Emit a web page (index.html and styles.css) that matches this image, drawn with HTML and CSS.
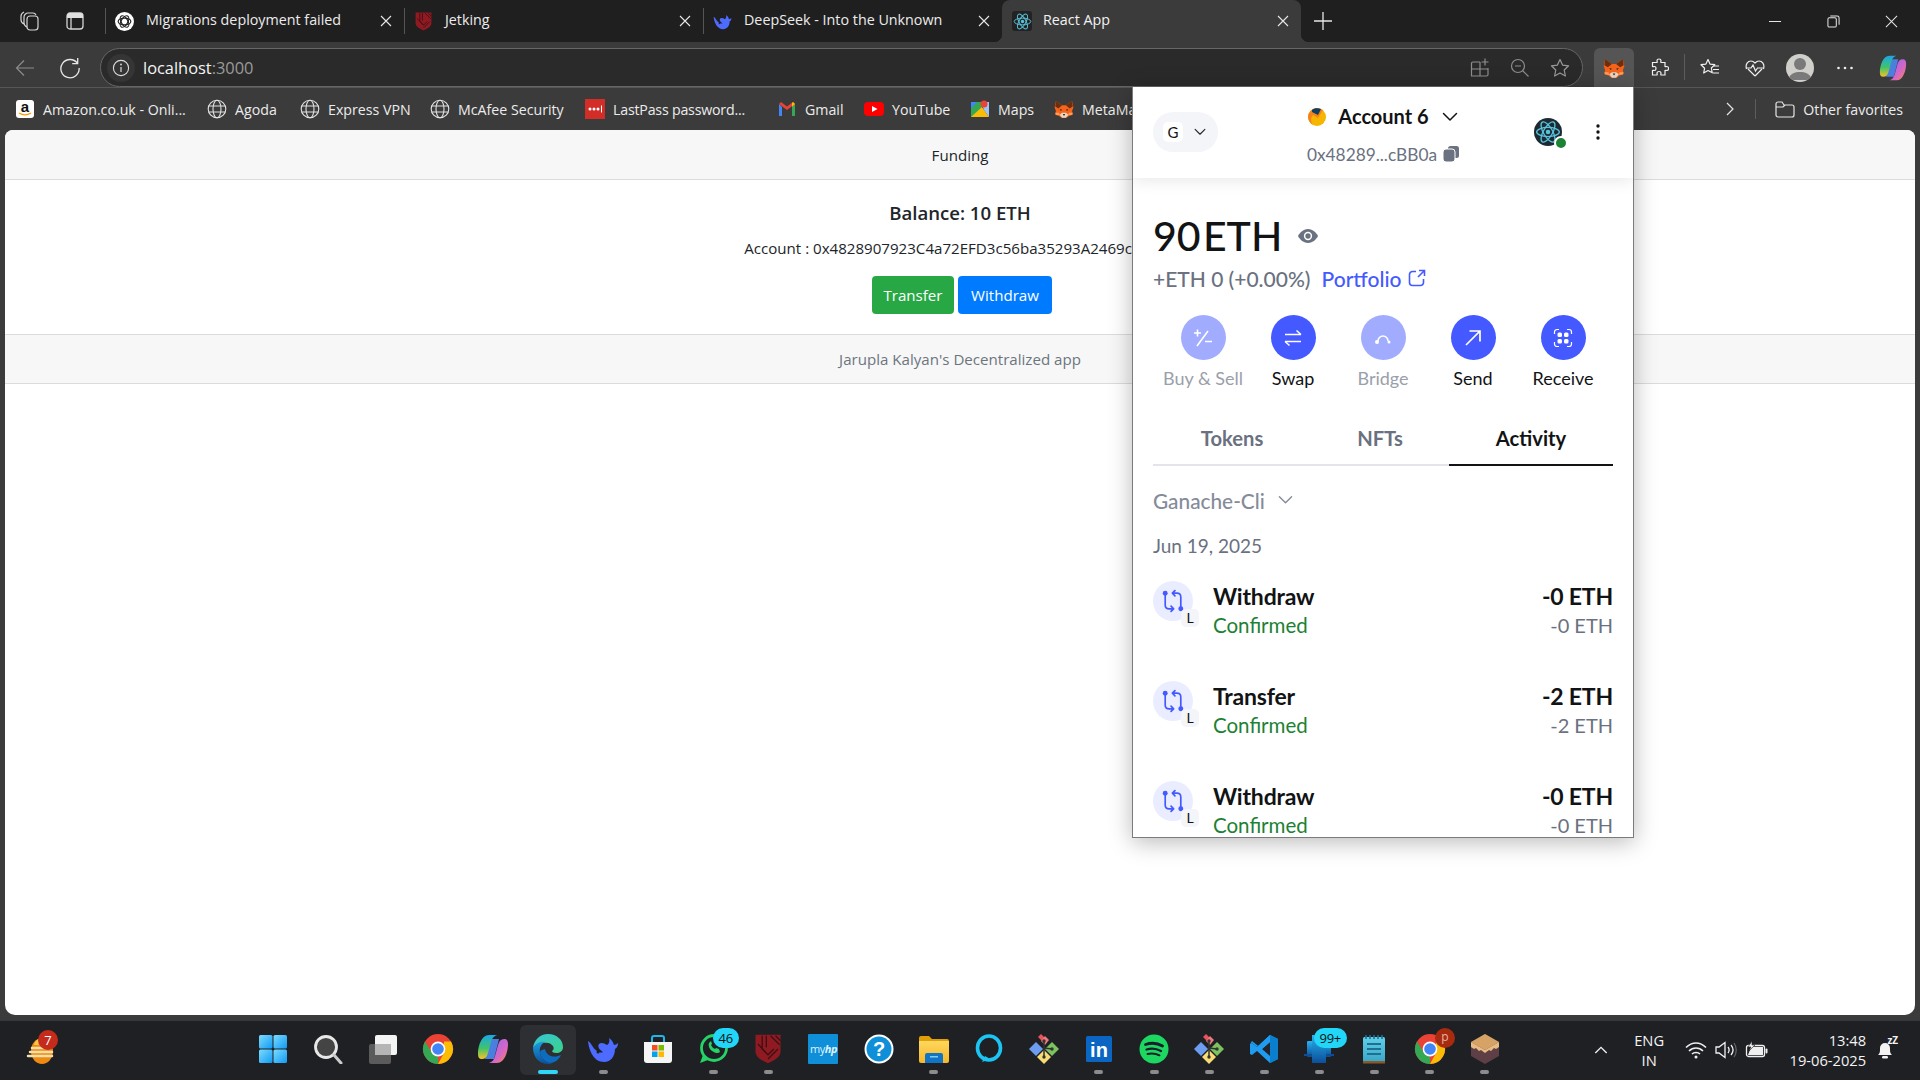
FILE: index.html
```html
<!DOCTYPE html>
<html lang="en">
<head>
<meta charset="utf-8">
<title>React App</title>
<link rel="stylesheet" href="styles.css">
</head>
<body>
<svg class="defs" aria-hidden="true">
  <defs>
    <linearGradient id="gWin" x1="0" y1="0" x2="1" y2="1"><stop offset="0" stop-color="#7ddcfc"/><stop offset="1" stop-color="#0f9af5"/></linearGradient>
    <linearGradient id="gCopL" x1="0" y1="0" x2="0" y2="1"><stop offset="0" stop-color="#1ba7e8"/><stop offset=".55" stop-color="#3fc46a"/><stop offset="1" stop-color="#f7c325"/></linearGradient>
    <linearGradient id="gCopR" x1="0" y1="0" x2="1" y2="1"><stop offset="0" stop-color="#8a6bf0"/><stop offset=".6" stop-color="#d566c8"/><stop offset="1" stop-color="#f88a4a"/></linearGradient>
    <linearGradient id="gEdge" x1="0" y1="0" x2="1" y2="1"><stop offset="0" stop-color="#36c6d6"/><stop offset="1" stop-color="#3bd08a"/></linearGradient>
    <linearGradient id="gEdge2" x1="0" y1="0" x2="0" y2="1"><stop offset="0" stop-color="#1b9de2"/><stop offset="1" stop-color="#0b4f98"/></linearGradient>
    <linearGradient id="gFold" x1="0" y1="0" x2="0" y2="1"><stop offset="0" stop-color="#ffd75e"/><stop offset="1" stop-color="#f5b82a"/></linearGradient>
    <linearGradient id="gNote" x1="0" y1="0" x2="0" y2="1"><stop offset="0" stop-color="#5fd0ea"/><stop offset="1" stop-color="#3aa6c8"/></linearGradient>
    <linearGradient id="gOut" x1="0" y1="0" x2="0" y2="1"><stop offset="0" stop-color="#29b1f0"/><stop offset="1" stop-color="#0b4f98"/></linearGradient>

    <symbol id="fox" viewBox="0 0 32 32">
      <polygon points="3,3 13,10 19,10 29,3 31,13 29,19 30,25 24,27 20,30 12,30 8,27 2,25 3,19 1,13" fill="#f6641b"/>
      <polygon points="3,3 13,10 7,15 2,12" fill="#6b2f10"/><polygon points="29,3 19,10 25,15 30,12" fill="#6b2f10"/>
      <polygon points="9,25 13,22 19,22 23,25 19,30 13,30" fill="#ead9c8"/><polygon points="2,22 8,22 9,26 3,25" fill="#ffa15c"/><polygon points="30,22 24,22 23,26 29,25" fill="#ffa15c"/>
      <polygon points="9,16 13,17 11,19" fill="#33261c"/><polygon points="23,16 19,17 21,19" fill="#33261c"/><polygon points="14,24 18,24 16,27" fill="#33261c"/>
    </symbol>
    <symbol id="react" viewBox="0 0 24 24">
      <g fill="none" stroke="#58c4dc" stroke-width="1.2"><ellipse cx="12" cy="12" rx="10.5" ry="4.2"/><ellipse cx="12" cy="12" rx="10.5" ry="4.2" transform="rotate(60 12 12)"/><ellipse cx="12" cy="12" rx="10.5" ry="4.2" transform="rotate(120 12 12)"/></g><circle cx="12" cy="12" r="2.1" fill="#58c4dc"/>
    </symbol>
    <symbol id="whale" viewBox="0 0 32 32">
      <path d="M1 8c1 10 6 21 16 21 7 0 11-6 11-13 2-1 3-3 3-6-1 1-3 2-4 2-1-3-2-5-5-7 1 3 0 6-2 7-3-2-6-3-8-1-2 3 1 6 4 8-3 2-8-2-10-5C4 11 3 9 1 8z" fill="#4d6bfe"/><circle cx="11" cy="19" r="1.500" fill="#1f2024"/>
    </symbol>
    <symbol id="shield" viewBox="0 0 32 36">
      <path d="M1 1h30v20c0 7-8 11-15 14C9 32 1 28 1 21z" fill="#8f1a22"/>
      <g stroke="#3d1014" stroke-width="1.6" fill="none"><path d="M9 2v16l7 7 7-7M14 2v14M19 2l11 11M25 2l6 6M4 12l12 13M28 18l-12 12"/></g>
    </symbol>
    <symbol id="gpt" viewBox="0 0 24 24">
      <circle cx="12" cy="12" r="12" fill="#fff"/>
      <g fill="none" stroke="#222" stroke-width="1.5"><ellipse cx="12" cy="12" rx="8" ry="4.2"/><ellipse cx="12" cy="12" rx="8" ry="4.2" transform="rotate(60 12 12)"/><ellipse cx="12" cy="12" rx="8" ry="4.2" transform="rotate(120 12 12)"/></g>
    </symbol>
    <symbol id="globe" viewBox="0 0 20 20">
      <g fill="none" stroke="#e2e2e2" stroke-width="1.1"><circle cx="10" cy="10" r="8.8"/><ellipse cx="10" cy="10" rx="4" ry="8.8"/><path d="M1.6 7h16.8M1.6 13h16.8"/></g>
    </symbol>
    <symbol id="chrome" viewBox="0 0 32 32">
      <circle cx="16" cy="16" r="15" fill="#ea4335"/>
      <path d="M16 31A15 15 0 0 1 3 8.5L10 20l6 4z" fill="#34a853"/>
      <path d="M29 8.500A15 15 0 0 1 16 31l6-11 0-11.500z" fill="#fbbc05"/>
      <circle cx="16" cy="16" r="7.400" fill="#fff"/><circle cx="16" cy="16" r="5.800" fill="#4285f4"/>
    </symbol>
    <symbol id="copilot" viewBox="0 0 32 32">
      <path d="M13 6h9l-5 20H8z" fill="#4a7fe0"/>
      <path d="M12 2h8c-3 1-5 3-6 7l-3 11c-1 4-3 6-6 6-3 0-4-2-4-5C1 14 4 2 12 2z" fill="url(#gCopL)"/>
      <path d="M20 30h-8c3-1 5-3 6-7l3-11c1-4 3-6 6-6 3 0 4 2 4 5 0 7-3 19-11 19z" fill="url(#gCopR)"/>
    </symbol>
    <symbol id="edge" viewBox="0 0 32 32">
      <path d="M1 15C2 7 8 1 16 1c9 0 15 6 15 13 0 4-3 6-7 6-2 0-4-1-4-2 2-1 2-3 1-5-2-3-6-4-10-3-5 1-8 3-10 5z" fill="url(#gEdge)"/>
      <path d="M1 15c2-4 7-7 12-6-4 2-6 6-5 11 1 5 5 9 10 10 1 0 2 0 3 0-2 1-4 1-5 1C7 31 1 24 1 15z" fill="url(#gEdge2)"/>
      <path d="M13 16c1 6 7 9 13 7 1 0 2-1 3-1-2 5-7 8-11 8-5-1-9-5-10-10 0-2 1-3 2-3z" fill="#0d6cbd"/>
    </symbol>
    <symbol id="git" viewBox="0 0 32 32">
      <polygon points="16,10 10,4 13,1 19,7" fill="#e8545a"/><polygon points="17,3 21,7 17,12 13,8" fill="#ee7a7d"/>
      <polygon points="1,16 8,9 15,16 8,23" fill="#6d9df0"/><polygon points="17,16 24,9 31,16 24,23" fill="#7cc35f"/><polygon points="9,24 16,17 23,24 16,31" fill="#f7dc75"/>
      <path d="M16 8v16M16 15l8 1" stroke="#333" stroke-width="1.5"/><circle cx="16" cy="24" r="1.700" fill="#333"/><circle cx="16" cy="8" r="1.700" fill="#333"/><circle cx="24" cy="16" r="1.700" fill="#333"/>
    </symbol>
    <symbol id="swaprow" viewBox="0 0 20 20">
      <g fill="none" stroke="#4459ff" stroke-width="1.300" stroke-linecap="round" stroke-linejoin="round"><path d="M4 4v9c0 2 1 3 3 3h3M8.500 14l2 2-2 2"/><path d="M16 16V7c0-2-1-3-3-3h-3M11.500 2l-2 2 2 2"/></g>
      <circle cx="4" cy="4" r="1.900" fill="#4459ff"/><circle cx="16" cy="16" r="1.900" fill="#4459ff"/>
    </symbol>
    <symbol id="chev" viewBox="0 0 16 10"><path d="M1.500 1.500L8 8l6.500-6.500" fill="none" stroke="currentColor" stroke-width="1.500" stroke-linecap="round" stroke-linejoin="round"/></symbol>
    <symbol id="x" viewBox="0 0 12 12"><path d="M1 1l10 10M11 1L1 11" stroke="#e8e8e8" stroke-width="1.100" fill="none"/></symbol>
  </defs>
</svg>

<header class="tabbar">
  <div class="tab-tools">
    <svg class="i20" viewBox="0 0 20 20"><g fill="none" stroke="#d5d5d5" stroke-width="1.200"><rect x="7" y="5" width="11" height="14" rx="3"/><path d="M7 16c-2-1-3-2-3-4V6c0-2 2-4 4-4h5c1 0 2 0 3 2M4 13c-2-1-3-2-3-4V5c0-2 1-3 3-4"/></g></svg>
    <svg class="i20" viewBox="0 0 20 20"><rect x="2" y="2" width="16" height="16" rx="3" fill="none" stroke="#d5d5d5" stroke-width="1.300"/><path d="M2 5a3 3 0 0 1 3-3h10a3 3 0 0 1 3 3v2H2z" fill="#e0e0e0"/><path d="M6 7v11" stroke="#d5d5d5" stroke-width="1.300"/></svg>
  </div>
  <div class="tab tab-sep"><svg class="fav"><use href="#gpt"/></svg><span class="tab-title">Migrations deployment failed</span><svg class="tab-x"><use href="#x"/></svg></div>
  <div class="tab tab-sep"><svg class="fav"><use href="#shield"/></svg><span class="tab-title">Jetking</span><svg class="tab-x"><use href="#x"/></svg></div>
  <div class="tab tab-sep"><svg class="fav"><use href="#whale"/></svg><span class="tab-title">DeepSeek - Into the Unknown</span><svg class="tab-x"><use href="#x"/></svg></div>
  <div class="tab tab-active"><span class="fav-box"><svg class="fav"><use href="#react"/></svg></span><span class="tab-title">React App</span><svg class="tab-x"><use href="#x"/></svg></div>
  <svg class="newtab" viewBox="0 0 18 18"><path d="M9 0v18M0 9h18" stroke="#e8e8e8" stroke-width="1.300"/></svg>
  <div class="win-ctrls">
    <svg class="win-btn" viewBox="0 0 14 14"><path d="M0 7h13" stroke="#e6e6e6" stroke-width="1.100"/></svg>
    <svg class="win-btn" viewBox="0 0 14 14"><rect x="1" y="3" width="9" height="10" rx="1.500" fill="none" stroke="#e6e6e6" stroke-width="1.100"/><path d="M3.500 1H11a2 2 0 0 1 2 2v7.500" fill="none" stroke="#e6e6e6" stroke-width="1.100"/></svg>
    <svg class="win-btn" viewBox="0 0 14 14"><path d="M1 1l12 12M13 1L1 13" stroke="#e6e6e6" stroke-width="1.100"/></svg>
  </div>
</header>

<nav class="toolbar">
  <div class="tool tool-back"><svg class="i20" viewBox="0 0 20 20"><path d="M19 10H1.500M9 2.500L1.500 10 9 17.500" fill="none" stroke="#8b8b8b" stroke-width="1.200"/></svg></div>
  <div class="tool tool-reload"><svg class="i22" viewBox="0 0 20 20"><path d="M16.800 5.800A8.300 8.300 0 1 0 18.300 10M17 1v5h-5" fill="none" stroke="#e6e6e6" stroke-width="1.200"/></svg></div>
  <div class="address">
    <span class="info"><svg class="i18" viewBox="0 0 18 18"><circle cx="9" cy="9" r="7.600" fill="none" stroke="#ddd" stroke-width="1.100"/><path d="M9 8v5" stroke="#ddd" stroke-width="1.200"/><circle cx="9" cy="5.500" r=".9" fill="#ddd"/></svg></span>
    <span class="url">localhost<span class="url-port">:3000</span></span>
    <span class="addr-actions">
      <svg class="i20" viewBox="0 0 20 20"><g fill="none" stroke="#8e8e8e" stroke-width="1.200"><path d="M10 4H3a1.500 1.500 0 0 0-1.500 1.500V18h15a1.500 1.500 0 0 0 1.500-1.500V10M1.500 11H18M10 4v14"/><path d="M15 .5v7M11.500 4h7"/></g></svg>
      <svg class="i20" viewBox="0 0 20 20"><g fill="none" stroke="#8e8e8e" stroke-width="1.200"><circle cx="8" cy="8" r="6.500"/><path d="M12.500 12.500L18.500 18.500M5 8h6"/></g></svg>
      <svg class="i20" viewBox="0 0 20 20"><path d="M10 1.500l2.600 5.600 6 .7-4.400 4.200 1.200 6L10 15l-5.400 3 1.200-6L1.400 7.800l6-.7z" fill="none" stroke="#9a9a9a" stroke-width="1.200" stroke-linejoin="round"/></svg>
    </span>
  </div>
  <div class="ext-active"><svg class="i22"><use href="#fox"/></svg></div>
  <div class="tool tool-wide"><svg class="i20" viewBox="0 0 20 20"><path d="M8 2.500c0-2 4-2 4 0 0 1-.5 1.500 0 2h4v4c.5.500 1 0 2 0 2 0 2 4 0 4-1 0-1.500-.5-2 0v4.500h-4c-.5-.5 0-1 0-2 0-2-4-2-4 0 0 1 .5 1.500 0 2H3.500v-4.500c.5-.5 1 0 2 0 2 0 2-4 0-4-1 0-1.500.5-2 0v-4h4.500c.5-.5 0-1 0-2z" fill="none" stroke="#f0f0f0" stroke-width="1.200"/></svg></div>
  <span class="tool-sep"></span>
  <div class="tool tool-wide"><svg class="i20" viewBox="0 0 20 20"><path d="M8 1.500l2 4.600 4.800.6-3.500 3.300 1 4.800L8 12.500 3.700 15l.9-4.800L1 6.700l4.900-.6z" fill="none" stroke="#f0f0f0" stroke-width="1.200" stroke-linejoin="round"/><path d="M14 8h5M13 11.500h6M13 15h6" stroke="#f0f0f0" stroke-width="1.200"/></svg></div>
  <div class="tool tool-mid"><svg class="i20" viewBox="0 0 20 20"><path d="M1.500 11C0 6 3 3 6 3c2 0 3 1 4 2 1-1 2-2 4-2 3 0 6 3 4.500 8M10 18l-7-7M10 18l7-7" fill="none" stroke="#f0f0f0" stroke-width="1.200"/><path d="M1 10h5l2-3 2.500 6 2-3h6" fill="none" stroke="#f0f0f0" stroke-width="1.200"/></svg></div>
  <div class="tool tool-wide"><span class="avatar"><svg viewBox="0 0 28 28"><circle cx="14" cy="10" r="6" fill="#7a7a7a"/><path d="M2 26c2-7 7-8 12-8s10 1 12 8z" fill="#7a7a7a"/></svg></span></div>
  <div class="tool tool-mid"><svg class="i20" viewBox="0 0 20 20"><circle cx="3.500" cy="10" r="1.300" fill="#eee"/><circle cx="10" cy="10" r="1.300" fill="#eee"/><circle cx="16.500" cy="10" r="1.300" fill="#eee"/></svg></div>
  <div class="tool tool-last"><svg class="i28"><use href="#copilot"/></svg></div>
</nav>

<div class="bookmarks">
  <div class="bm"><span class="amz">a<svg class="amz-smile" viewBox="0 0 18 6"><path d="M3 1c4 2.500 8 2.500 12 0" stroke="#f90" stroke-width="1.400" fill="none"/></svg></span><span>Amazon.co.uk - Onli...</span></div>
  <div class="bm"><svg class="i20"><use href="#globe"/></svg><span>Agoda</span></div>
  <div class="bm"><svg class="i20"><use href="#globe"/></svg><span>Express VPN</span></div>
  <div class="bm"><svg class="i20"><use href="#globe"/></svg><span>McAfee Security</span></div>
  <div class="bm"><svg class="i20" viewBox="0 0 20 20"><rect width="20" height="20" fill="#d32d27"/><circle cx="5" cy="10" r="1.500" fill="#fff"/><circle cx="9" cy="10" r="1.500" fill="#fff"/><circle cx="13" cy="10" r="1.500" fill="#fff"/><path d="M16.500 6.500v7" stroke="#fff" stroke-width="1"/></svg><span class="bm-tight">LastPass password...</span></div>
  <div class="bm"><svg class="i18" viewBox="0 0 18 18"><path d="M1 4v12h3V7z" fill="#4285f4"/><path d="M14 7v9h3V4z" fill="#34a853"/><path d="M1 4l8 6 8-6-2-2-6 4.500L3 2z" fill="#ea4335"/><path d="M14 7l3-3-2-2-1 1z" fill="#fbbc05"/></svg><span>Gmail</span></div>
  <div class="bm"><svg class="i20" viewBox="0 0 20 20"><rect x="0" y="3" width="20" height="14" rx="4" fill="#f00"/><polygon points="8,7 8,13 13.500,10" fill="#fff"/></svg><span>YouTube</span></div>
  <div class="bm"><svg class="i20" viewBox="0 0 20 20"><polygon points="1,3 12,3 12,18 1,18" fill="#34a853"/><polygon points="1,18 12,8 19,18" fill="#fbbc05"/><polygon points="1,3 7,3 1,10" fill="#4285f4"/><polygon points="11,3 19,3 19,18 14,11" fill="#9fc3f5"/><circle cx="14" cy="5" r="3.500" fill="#ea4335"/></svg><span>Maps</span></div>
  <div class="bm"><svg class="i20"><use href="#fox"/></svg><span>MetaMask</span></div>
  <div class="bm-end">
    <svg class="i14" viewBox="0 0 14 14"><path d="M4 1l6 6-6 6" fill="none" stroke="#e6e6e6" stroke-width="1.200"/></svg>
    <span class="bm-sep"></span>
    <svg class="i20" viewBox="0 0 20 20"><path d="M1 5a2 2 0 0 1 2-2h4l2 3h8a2 2 0 0 1 2 2v8a2 2 0 0 1-2 2H3a2 2 0 0 1-2-2zM1 8h7l2-2" fill="none" stroke="#e6e6e6" stroke-width="1.200"/></svg>
    <span class="bm-other">Other favorites</span>
  </div>
</div>

<main class="viewport">
  <section class="page">
    <div class="card-head">Funding</div>
    <div class="card-body">
      <h5 class="balance">Balance: 10 ETH</h5>
      <p class="account">Account : 0x4828907923C4a72EFD3c56ba35293A2469ccBB0a</p>
      <div class="btns"><button class="btn btn-green">Transfer</button><button class="btn btn-blue">Withdraw</button></div>
    </div>
    <div class="card-foot">Jarupla Kalyan's Decentralized app</div>
  </section>
</main>

<footer class="taskbar">
  <div class="tb-left">
    <div class="widget">
      <svg class="i30" viewBox="0 0 30 30"><ellipse cx="16" cy="16" rx="11" ry="13" fill="#ee8a12"/><path d="M8 10c1-5 5-7 9-7 5 0 8 3 9 7z" fill="#f9c84a"/><g stroke="#f6dfa8" stroke-width="2.500" stroke-linecap="round"><path d="M6 13h12M4 17h22M2 21h24"/></g></svg>
      <span class="badge badge-red">7</span>
    </div>
  </div>
  <div class="apps">
    <div class="app"><svg class="i30" viewBox="0 0 30 30"><rect x="1" y="1" width="13.500" height="13.500" rx="1.500" fill="url(#gWin)"/><rect x="15.500" y="1" width="13.500" height="13.500" rx="1.500" fill="url(#gWin)"/><rect x="1" y="15.500" width="13.500" height="13.500" rx="1.500" fill="url(#gWin)"/><rect x="15.500" y="15.500" width="13.500" height="13.500" rx="1.500" fill="url(#gWin)"/></svg></div>
    <div class="app"><svg class="i30" viewBox="0 0 30 30"><circle cx="13" cy="13" r="10.500" fill="#444" stroke="#e8e8e8" stroke-width="2.800"/><path d="M21 21l7 8" stroke="#ccc" stroke-width="3" stroke-linecap="round"/></svg></div>
    <div class="app"><svg class="i30" viewBox="0 0 30 30"><rect x="1" y="10" width="22" height="20" rx="2" fill="#5b5b5b"/><rect x="7" y="1" width="22" height="20" rx="2" fill="#f4f4f4"/><rect x="7" y="10" width="16" height="11" fill="#b5b5b5"/></svg></div>
    <div class="app"><svg class="i32"><use href="#chrome"/></svg></div>
    <div class="app"><svg class="i32"><use href="#copilot"/></svg></div>
    <div class="app app-active"><svg class="i32"><use href="#edge"/></svg><span class="run run-active"></span></div>
    <div class="app"><svg class="i32"><use href="#whale"/></svg><span class="run"></span></div>
    <div class="app"><svg class="i30" viewBox="0 0 30 30"><path d="M1 8h28v18a3 3 0 0 1-3 3H4a3 3 0 0 1-3-3z" fill="#f5f5f5"/><path d="M9 8V4a2 2 0 0 1 2-2h8a2 2 0 0 1 2 2v4" fill="none" stroke="#1fb6e8" stroke-width="2"/><rect x="9" y="11" width="5.500" height="5.500" fill="#f25022"/><rect x="15.500" y="11" width="5.500" height="5.500" fill="#7fba00"/><rect x="9" y="17.500" width="5.500" height="5.500" fill="#00a4ef"/><rect x="15.500" y="17.500" width="5.500" height="5.500" fill="#ffb900"/></svg></div>
    <div class="app"><svg class="i32" viewBox="0 0 32 32"><circle cx="17" cy="15" r="12.500" fill="none" stroke="#25d366" stroke-width="2.800"/><path d="M6 22l-3 8 8-3z" fill="#25d366"/><path d="M12 10c-1 2 0 6 3 8s6 3 8 1l-1-3-3-1-1 1c-2-1-3-2-4-4l1-1-1-3z" fill="#25d366"/></svg><span class="badge badge-cyan">46</span><span class="run"></span></div>
    <div class="app"><svg class="i30" viewBox="0 0 32 36"><use href="#shield"/></svg><span class="run"></span></div>
    <div class="app"><div class="myhp">my<i>hp</i></div></div>
    <div class="app"><svg class="i30" viewBox="0 0 30 30"><circle cx="15" cy="15" r="14.500" fill="#fff"/><circle cx="15" cy="15" r="12.500" fill="#0f8fd8"/><text x="15" y="22" text-anchor="middle" class="help-q">?</text></svg></div>
    <div class="app"><svg class="i30" viewBox="0 0 30 30"><path d="M0 4a2 2 0 0 1 2-2h8l3 3h15a2 2 0 0 1 2 2v3H0z" fill="#e0a008"/><path d="M0 7h30v20a2 2 0 0 1-2 2H2a2 2 0 0 1-2-2z" fill="url(#gFold)"/><path d="M6 21a2 2 0 0 1 2-2h14a2 2 0 0 1 2 2v8H6z" fill="#1274c4"/><rect x="11" y="22" width="8" height="1.500" fill="#7ecbf5"/></svg><span class="run"></span></div>
    <div class="app"><svg class="i30" viewBox="0 0 30 30"><ellipse cx="15" cy="14" rx="11.500" ry="12" fill="none" stroke="#1cc4f4" stroke-width="3.600"/><path d="M8 28l3-6 5 3z" fill="#1cc4f4"/></svg></div>
    <div class="app"><svg class="i32"><use href="#git"/></svg></div>
    <div class="app"><svg class="i30" viewBox="0 0 30 30"><rect x="2" y="2" width="26" height="26" rx="1.500" fill="#0a66c2"/><text x="15" y="23" text-anchor="middle" class="li-in">in</text></svg><span class="run"></span></div>
    <div class="app"><svg class="i30" viewBox="0 0 30 30"><circle cx="15" cy="15" r="14.500" fill="#1ed760"/><g fill="none" stroke="#16202a" stroke-linecap="round"><path d="M6.500 10.500c6-2 12-1.500 17 1.500" stroke-width="2.800"/><path d="M7.500 15.500c5-1.500 10-1 14.500 1.500" stroke-width="2.300"/><path d="M8.500 20c4-1 8-.7 12 1.300" stroke-width="1.900"/></g></svg><span class="run"></span></div>
    <div class="app"><svg class="i32"><use href="#git"/></svg><span class="run"></span></div>
    <div class="app"><svg class="i30" viewBox="0 0 30 30"><path d="M21 1l8 4v20l-8 4L8 17l-5 4-2-1V10l2-1 5 4z" fill="#1f9cf0"/><path d="M21 8l-8 7 8 7z" fill="#22262c"/><path d="M21 1l8 4v20l-8 4z" fill="#0a7fd0"/><path d="M1 10l2-1 5 4 13-12v7l-8 7-10-8z" fill="#1f9cf0"/></svg><span class="run"></span></div>
    <div class="app"><svg class="i30" viewBox="0 0 30 30"><rect x="3" y="7" width="24" height="16" rx="1" fill="url(#gOut)"/><rect x="0" y="20" width="30" height="2" fill="#0b4f98"/><rect x="8" y="1" width="14" height="28" fill="url(#gOut)"/></svg><span class="badge badge-cyan badge-wide">99+</span><span class="run"></span></div>
    <div class="app"><svg class="i30" viewBox="0 0 30 30"><rect x="4" y="3" width="22" height="25" rx="1.500" fill="url(#gNote)"/><rect x="4" y="27" width="22" height="2.500" fill="#8b5a2b"/><path d="M8 10h14M8 15h14M8 20h14" stroke="#1e6f90" stroke-width="1.800"/><path d="M7 1v4M11 1v4M15 1v4M19 1v4M23 1v4" stroke="#1e6f90" stroke-width="1.600"/></svg><span class="run"></span></div>
    <div class="app"><svg class="i32"><use href="#chrome"/></svg><span class="badge badge-p">p</span><span class="run"></span></div>
    <div class="app"><svg class="i30" viewBox="0 0 30 30"><polygon points="15,0 29,8 29,22 15,30 1,22 1,8" fill="#5d3f45"/><polygon points="15,0 29,8 15,16 1,8" fill="#d7a266"/><path d="M1 8l14 8 14-8v5l-3 2-2-1-3 3-2-1-4 3-4-3-2 1-3-3-2 1-3-2z" fill="#e8bb83"/></svg><span class="run"></span></div>
  </div>
  <div class="tray">
    <svg class="tray-chev" viewBox="0 0 16 10"><path d="M1.500 8.500L8 2l6.500 6.500" fill="none" stroke="#f0f0f0" stroke-width="1.600"/></svg>
    <div class="lang"><div>ENG</div><div>IN</div></div>
    <svg class="tray-wifi" viewBox="0 0 22 18"><g fill="none" stroke="#f0f0f0" stroke-width="1.600"><path d="M1 6.500c6-6 14-6 20 0M4 10c4-4 10-4 14 0M7 13c2-2 6-2 8 0"/></g><circle cx="11" cy="16" r="1.500" fill="#f0f0f0"/></svg>
    <svg class="tray-sound" viewBox="0 0 22 18"><path d="M1 6h3l6-4.500v15L4 12H1z" fill="none" stroke="#f0f0f0" stroke-width="1.300"/><path d="M13 6c1.500 2 1.500 4 0 6M16 4c2.500 3 2.500 7 0 10" fill="none" stroke="#f0f0f0" stroke-width="1.300"/><path d="M19 2c3 4 3 10 0 14" fill="none" stroke="#666" stroke-width="1.200"/></svg>
    <svg class="tray-bat" viewBox="0 0 24 18"><rect x="1.500" y="4.500" width="18" height="11" rx="2" fill="none" stroke="#f0f0f0" stroke-width="1.300"/><path d="M6 6h12v8H3z" fill="#f0f0f0"/><rect x="20.500" y="7.500" width="2" height="5" rx="1" fill="#f0f0f0"/><path d="M7 0L3 6h3l-2 4 6-6H7z" fill="#f0f0f0" stroke="#1e2024" stroke-width=".6"/></svg>
    <div class="clock"><div>13:48</div><div>19-06-2025</div></div>
    <div class="bell"><svg class="i20" viewBox="0 0 20 20"><path d="M3 15c1-1 2-2 2-5V8a5 5 0 0 1 10 0v2c0 3 1 4 2 5z" fill="#f2f2f2"/><rect x="7" y="16" width="6" height="2.500" rx="1.200" fill="#f2f2f2"/></svg><span class="zz">zZ</span></div>
  </div>
</footer>

<aside class="popup">
  <div class="mm-head">
    <div class="mm-pill"><span class="mm-g">G</span><svg class="mm-chev-s"><use href="#chev"/></svg></div>
    <div class="mm-account">
      <div class="mm-acc-row">
        <svg class="i18" viewBox="0 0 18 18"><circle cx="9" cy="9" r="9" fill="#f7b500"/><path d="M9 0A9 9 0 0 0 0 9c0 3 2 6 5 8-2-3-3-7 0-10l5 3 5-8c-2-1-4-2-6-2z" fill="#f5821f"/><path d="M4 2c2-2 6-2 9-1l-3 6-6-3z" fill="#0e3d66"/></svg>
        <span class="mm-acc-name">Account 6</span>
        <svg class="mm-chev-l"><use href="#chev"/></svg>
      </div>
      <div class="mm-addr-row"><span>0x48289...cBB0a</span><svg class="i16" viewBox="0 0 16 16"><rect x="5" y="0" width="11" height="12" rx="2.500" fill="#6a7180"/><rect x="0" y="3" width="12" height="13" rx="3" fill="#6a7180" stroke="#fff" stroke-width="1"/></svg></div>
    </div>
    <div class="mm-right">
      <div class="mm-net"><span class="mm-net-img"><svg class="i26"><use href="#react"/></svg></span><span class="mm-net-dot"></span></div>
      <svg class="mm-kebab" viewBox="0 0 4 16"><circle cx="2" cy="2" r="1.700" fill="#121314"/><circle cx="2" cy="8" r="1.700" fill="#121314"/><circle cx="2" cy="14" r="1.700" fill="#121314"/></svg>
    </div>
  </div>

  <div class="mm-balance">
    <span class="mm-amount">90 ETH</span>
    <svg class="mm-eye" viewBox="0 0 20 14"><path d="M10 0c5 0 8.500 4 10 7-1.500 3-5 7-10 7S1.500 10 0 7c1.500-3 5-7 10-7z" fill="#6a7180"/><circle cx="10" cy="7" r="3.400" fill="none" stroke="#fff" stroke-width="1.500"/></svg>
  </div>
  <div class="mm-change"><span>+ETH 0 (+0.00%)</span><span class="mm-portfolio">Portfolio</span><svg class="i18" viewBox="0 0 18 18"><path d="M8 2.500H4.500a3 3 0 0 0-3 3v8a3 3 0 0 0 3 3h8a3 3 0 0 0 3-3V10M10 8l6.500-6.500M11 1.500h5.500V7" fill="none" stroke="#4459ff" stroke-width="1.600"/></svg></div>

  <div class="mm-actions">
    <div class="mm-action mm-off"><span class="mm-circle"><svg class="i22" viewBox="0 0 22 22"><path d="M2 6h7M5.500 2.500v7M13 14.500h7M5 19L16 4" fill="none" stroke="#fff" stroke-width="1.600"/></svg></span><span>Buy &amp; Sell</span></div>
    <div class="mm-action"><span class="mm-circle"><svg class="i22" viewBox="0 0 22 22"><path d="M3 7.500h16M14.500 3.500l4.500 4M19 14.500H3M7.500 18.500L3 14.500" fill="none" stroke="#fff" stroke-width="1.500"/></svg></span><span>Swap</span></div>
    <div class="mm-action mm-off"><span class="mm-circle"><svg class="i22" viewBox="0 0 22 22"><path d="M6 14a5 5 0 0 1 10 0" fill="none" stroke="#fff" stroke-width="1.500"/><circle cx="5" cy="15" r="2" fill="#fff"/><circle cx="17" cy="15" r="1.500" fill="#fff"/></svg></span><span>Bridge</span></div>
    <div class="mm-action"><span class="mm-circle"><svg class="i22" viewBox="0 0 22 22"><path d="M4 18L18 4M7.500 4H18v10.500" fill="none" stroke="#fff" stroke-width="1.700"/></svg></span><span>Send</span></div>
    <div class="mm-action"><span class="mm-circle"><svg class="i22" viewBox="0 0 22 22"><g fill="#fff"><rect x="5.500" y="5.500" width="4.500" height="4.500" rx="1.500"/><rect x="12" y="5.500" width="4.500" height="4.500" rx="1.500"/><rect x="5.500" y="12" width="4.500" height="4.500" rx="1.500"/><rect x="12" y="12" width="4.500" height="4.500" rx="1.500"/></g><path d="M2.500 7V5a2.500 2.500 0 0 1 2.500-2.500h2M15 2.500h2A2.500 2.500 0 0 1 19.500 5v2M19.500 15v2a2.500 2.500 0 0 1-2.500 2.500h-2M7 19.500H5A2.500 2.500 0 0 1 2.500 17v-2" fill="none" stroke="#fff" stroke-width="1.200"/></svg></span><span>Receive</span></div>
  </div>

  <div class="mm-tabs">
    <span class="mm-tab mm-tab-a">Tokens</span>
    <span class="mm-tab mm-tab-b">NFTs</span>
    <span class="mm-tab mm-tab-c mm-tab-on">Activity</span>
  </div>

  <div class="mm-filter"><span>Ganache-Cli</span><svg class="mm-chev-m"><use href="#chev"/></svg></div>
  <div class="mm-date">Jun 19, 2025</div>

  <div class="mm-row">
    <div class="mm-ico"><svg class="i26"><use href="#swaprow"/></svg><span class="mm-l">L</span></div>
    <div class="mm-txt"><div class="mm-title">Withdraw</div><div class="mm-ok">Confirmed</div></div>
    <div class="mm-val"><div class="mm-title">-0 ETH</div><div class="mm-sub">-0 ETH</div></div>
  </div>
  <div class="mm-row">
    <div class="mm-ico"><svg class="i26"><use href="#swaprow"/></svg><span class="mm-l">L</span></div>
    <div class="mm-txt"><div class="mm-title">Transfer</div><div class="mm-ok">Confirmed</div></div>
    <div class="mm-val"><div class="mm-title">-2 ETH</div><div class="mm-sub">-2 ETH</div></div>
  </div>
  <div class="mm-row">
    <div class="mm-ico"><svg class="i26"><use href="#swaprow"/></svg><span class="mm-l">L</span></div>
    <div class="mm-txt"><div class="mm-title">Withdraw</div><div class="mm-ok">Confirmed</div></div>
    <div class="mm-val"><div class="mm-title">-0 ETH</div><div class="mm-sub">-0 ETH</div></div>
  </div>
</aside>
</body>
</html>
```
FILE: styles.css
```css
* { box-sizing: border-box; }
html, body { margin: 0; padding: 0; height: 100%; }
body {
  position: relative; width: 1920px; height: 1080px; overflow: hidden;
  display: flex; flex-direction: column;
  background: #3b3b3b; color: #eee;
  font-family: "Open Sans", "Noto Sans", sans-serif;
}
svg { display: block; flex: none; }
.defs { position: absolute; width: 0; height: 0; }
.i14 { width: 14px; height: 14px; }
.i16 { width: 16px; height: 16px; }
.i18 { width: 18px; height: 18px; }
.i20 { width: 20px; height: 20px; }
.i22 { width: 22px; height: 22px; }
.i26 { width: 26px; height: 26px; }
.i28 { width: 28px; height: 28px; }
.i30 { width: 30px; height: 30px; }
.i32 { width: 32px; height: 32px; }

/* tab strip */
.tabbar { height: 42px; flex: none; display: flex; align-items: stretch; background: #1f1f1f; position: relative; }
.tab-tools { width: 105px; flex: none; display: flex; align-items: center; gap: 25px; padding-left: 20px; }
.tab { width: 299px; flex: none; display: flex; align-items: center; padding: 0 11px 0 10px; position: relative; font-size: 14.300px; color: #ececec; }
.tab-sep::before { content: ""; position: absolute; left: 0; top: 8px; bottom: 8px; width: 1px; background: #555; }
.tab-active { width: 299px; background: #3b3b3b; border-radius: 8px 8px 0 0; color: #f2f2f2; }
.tab-active::before, .tab-active::after { content: ""; position: absolute; bottom: 0; width: 8px; height: 8px; }
.tab-active::before { left: -8px; background: radial-gradient(circle at 0 0, #1f1f1f 8px, #3b3b3b 8.5px); }
.tab-active::after { right: -8px; background: radial-gradient(circle at 100% 0, #1f1f1f 8px, #3b3b3b 8.5px); }
.fav { width: 19px; height: 19px; }
.fav-box { width: 20px; height: 20px; background: #222; border-radius: 3px; display: flex; align-items: center; justify-content: center; }
.tab-title { margin-left: 12px; white-space: nowrap; padding-bottom: 4px; }
.tab-active .tab-title { margin-left: 11px; }
.tab-x { width: 12px; height: 12px; margin-left: auto; margin-right: 1.500px; }
.newtab { width: 18px; height: 18px; margin: auto 0 auto 13px; }
.win-ctrls { margin-left: auto; display: flex; align-items: center; gap: 45px; padding-right: 22px; }
.win-btn { width: 13px; height: 13px; }

/* toolbar */
.toolbar { height: 45px; flex: none; display: flex; align-items: flex-start; padding: 6px 0 0 3px; }
.tool { height: 39px; display: flex; align-items: center; justify-content: center; width: 44px; flex: none; }
.tool-reload { margin-right: 9px; padding-left: 2px; }
.tool-wide { width: 50px; }
.tool-mid { width: 40px; }
.tool-last { width: 55px; }
.tool-sep { width: 1px; height: 26px; margin-top: 6px; background: #5c5c5c; flex: none; }
.address { width: 1483px; height: 39px; flex: none; display: flex; align-items: center; background: #2a2a2a; border: 1.500px solid #666; border-radius: 20px; padding: 0 12px 0 6px; }
.info { width: 28px; height: 28px; border-radius: 50%; background: #353535; display: flex; align-items: center; justify-content: center; }
.url { margin-left: 8px; font-size: 16.400px; color: #f4f4f4; }
.url-port { color: #9a9a9a; }
.addr-actions { margin-left: auto; display: flex; align-items: center; gap: 20px; }
.ext-active { width: 40px; height: 39px; margin-left: 11px; flex: none; background: #555; border-radius: 6px 6px 0 0; display: flex; align-items: center; justify-content: center; }
.avatar { width: 28px; height: 28px; border-radius: 50%; background: #d0cfcb; overflow: hidden; display: block; }

/* bookmarks */
.bookmarks { height: 43px; flex: none; display: grid; grid-template-columns: 192px 93px 130px 155px 192px 87px 106px 84px 600px 1fr; align-items: center; padding: 0 0 0 16px; border-top: 1px solid #565656; font-size: 14.200px; color: #ececec; }
.bm { display: flex; align-items: center; gap: 9px; white-space: nowrap; min-width: 0; }
.bm svg.i20 { margin: 0 -1px; }
.bm-tight { letter-spacing: -.2px; }
.amz { position: relative; width: 18px; height: 18px; flex: none; border-radius: 3px; background: #fff; color: #111; font: 700 15px/14px "Liberation Sans", sans-serif; text-align: center; }
.amz-smile { position: absolute; left: 0; bottom: 0; width: 18px; height: 6px; }
.bm-end { display: flex; align-items: center; justify-content: flex-end; padding-right: 17px; }
.bm-sep { width: 1px; height: 20px; background: #5c5c5c; margin: 0 19px 0 18px; }
.bm-other { margin-left: 8px; white-space: nowrap; }

/* page */
.viewport { height: 890px; flex: none; padding: 0 5px 5px; }
.page { height: 100%; background: #fff; border-radius: 8px 8px 10px 10px; overflow: hidden; color: #212529; font-size: 15.100px; text-align: center; }
.card-head { height: 50px; line-height: 50px; background: #f7f7f7; border-bottom: 1px solid #dcdcdc; }
.card-body { height: 154px; padding-top: 21px; }
.balance { margin: 0 0 11px; font-size: 18.600px; line-height: 24px; font-weight: 600; }
.account { margin: 0 0 16px; line-height: 24px; white-space: nowrap; }
.btns { display: flex; justify-content: center; gap: 4px; padding-left: 4px; }
.btn { height: 38px; border: 0; border-radius: 4px; color: #fff; font: inherit; padding: 0; }
.btn-green { width: 82px; background: #28a745; }
.btn-blue { width: 94px; background: #007bff; }
.card-foot { height: 50px; line-height: 49px; background: #f7f7f7; border-top: 1px solid #dcdcdc; border-bottom: 1px solid #dcdcdc; color: #6c757d; }

/* taskbar */
.taskbar { height: 60px; flex: none; display: flex; background: #1e2024; border-top: 1px solid #35373b; position: relative; }
.tb-left { width: 245px; flex: none; padding-left: 26px; display: flex; align-items: center; padding-bottom: 1px; }
.widget { position: relative; }
.apps { display: flex; flex: none; padding-top: 4px; }
.app { width: 55.100px; height: 50px; flex: none; display: flex; align-items: center; justify-content: center; padding-bottom: 2px; position: relative; border-radius: 6px; }
.app-active { background: #2d2f33; }
.run { position: absolute; left: 50%; bottom: 1px; width: 9px; height: 4px; margin-left: -4.500px; border-radius: 2px; background: #8c8c8c; }
.run-active { width: 20px; margin-left: -10px; background: #2fd6f5; }
.badge { position: absolute; font-size: 13px; line-height: 20px; text-align: center; }
.badge-red { top: -5px; right: -2px; width: 20px; height: 20px; border-radius: 50%; background: #c42b1c; color: #fff; }
.badge-cyan { top: 3px; left: 27px; width: 26px; height: 20px; border-radius: 10px; background: #22d6f8; color: #111; letter-spacing: -.3px; }
.badge-wide { left: 22px; width: 33px; }
.badge-p { top: 3px; left: 33px; width: 20px; height: 20px; border-radius: 50%; background: #a82a0f; color: #e8b49e; font-size: 12px; line-height: 17px; }
.myhp { width: 30px; height: 30px; background: #0f8fd8; border-radius: 1px; color: #dff2ff; font: 11px/30px "Open Sans", sans-serif; text-align: center; letter-spacing: -.5px; }
.myhp i { font-weight: 700; }
.help-q { font: 700 20px "Liberation Sans", sans-serif; fill: #fff; }
.li-in { font: 700 20px "Liberation Sans", sans-serif; fill: #fff; }
.tray { display: flex; align-items: center; color: #f4f4f4; font-size: 14.700px; padding-bottom: 2px; }
.tray-chev { width: 14px; height: 10px; margin-left: 82px; }
.lang { width: 50px; margin-left: 16px; text-align: center; line-height: 20px; margin-right: -2px; }
.tray-wifi { width: 22px; height: 18px; margin-left: 13px; }
.tray-sound { width: 22px; height: 18px; margin-left: 8px; }
.tray-bat { width: 24px; height: 18px; margin-left: 8px; }
.clock { width: 96px; margin-left: 1px; text-align: right; line-height: 20px; }
.bell { width: 20px; margin-left: 9px; position: relative; }
.zz { position: absolute; right: -3px; top: -5px; font-size: 10px; font-weight: 700; line-height: 10px; }

/* wallet popup */
.popup { position: absolute; left: 1132px; top: 87px; width: 502px; height: 751px; background: #fff; border: 1px solid #7b7b7b; border-top: 0; overflow: hidden; box-shadow: 0 4px 22px rgba(0,0,0,.28); color: #121314; font-family: Lato, "Open Sans", sans-serif; }
.mm-head { height: 91px; display: grid; grid-template-columns: 1fr auto 1fr; align-items: center; padding: 0 20px 1px; box-shadow: 0 2px 16px rgba(0,0,0,.1); position: relative; }
.mm-pill { width: 65px; height: 40px; border-radius: 20px; background: #f3f5f9; display: flex; align-items: center; padding-left: 10px; }
.mm-g { width: 20px; height: 20px; border-radius: 5px; background: #fff; font-size: 15px; line-height: 20px; text-align: center; }
.mm-chev-s { width: 12px; height: 8px; margin-left: 11px; color: #24272a; }
.mm-account { align-self: start; padding-top: 18px; display: flex; flex-direction: column; align-items: center; }
.mm-acc-row { display: flex; align-items: center; height: 24px; }
.mm-acc-name { margin-left: 12px; font-size: 20px; line-height: 22px; padding-bottom: 2px; font-weight: 700; }
.mm-chev-l { width: 16px; height: 10px; margin-left: 13px; color: #121314; }
.mm-addr-row { display: flex; align-items: center; gap: 6px; margin-top: 13px; height: 24px; color: #6a7180; font-size: 17.300px; }
.mm-right { display: flex; justify-content: flex-end; align-items: center; padding-right: 13px; gap: 34px; }
.mm-net { position: relative; }
.mm-net-img { width: 28px; height: 28px; border-radius: 50%; background: #1e2a33; display: flex; align-items: center; justify-content: center; }
.mm-net-dot { position: absolute; right: -6px; bottom: -4px; width: 14px; height: 14px; border-radius: 50%; background: #1c8234; border: 2px solid #fff; }
.mm-kebab { width: 4px; height: 16px; }
.mm-balance { display: flex; align-items: center; padding: 34px 20px 0; height: 82px; }
.mm-amount { font-size: 41px; line-height: 48px; font-weight: 500; word-spacing: -8px; }
.mm-eye { width: 20px; height: 14px; margin-left: 16px; }
.mm-change { display: flex; align-items: center; margin-top: 6px; padding: 0 20px; height: 24px; font-size: 21px; color: #6a7180; font-weight: 500; }
.mm-portfolio { margin: 0 6px 0 11px; color: #4459ff; }
.mm-actions { display: flex; justify-content: center; margin-top: 25px; padding: 0 20px; }
.mm-action { width: 90px; display: flex; flex-direction: column; align-items: center; font-size: 18px; line-height: 24px; color: #121314; }
.mm-circle { width: 45px; height: 45px; border-radius: 50%; background: #4459ff; margin-bottom: 6px; display: flex; align-items: center; justify-content: center; }
.mm-off { color: #9a9fab; }
.mm-off .mm-circle { background: #a1acff; }
.mm-tabs { display: flex; margin: 37px 20px 0; border-bottom: 2px solid #e3e5ea; height: 39px; font-size: 20.200px; font-weight: 700; color: #6a7180; line-height: 22px; }
.mm-tab { text-align: center; height: 39px; }
.mm-tab-a { width: 158px; }
.mm-tab-b { width: 138px; }
.mm-tab-c { width: 164px; }
.mm-tab-on { color: #121314; border-bottom: 2px solid #121314; }
.mm-filter { display: flex; align-items: center; margin-top: 22px; padding: 0 20px; height: 24px; font-size: 20.800px; font-weight: 500; color: #858b9a; }
.mm-chev-m { width: 15px; height: 10px; margin-left: 13px; color: #858b9a; }
.mm-date { margin-top: 22px; padding: 0 20px; font-size: 19px; line-height: 24px; color: #6a7180; }
.mm-row { display: flex; height: 100px; padding: 0 20px; }
.mm-date + .mm-row { margin-top: 23px; }
.mm-ico { width: 40px; height: 40px; border-radius: 50%; background: #eaedff; display: flex; align-items: center; justify-content: center; position: relative; flex: none; }
.mm-l { position: absolute; right: -6px; bottom: -6px; width: 18px; height: 18px; border-radius: 5px; background: #f3f5f9; font-size: 14px; line-height: 18px; text-align: center; color: #121314; }
.mm-txt { margin-left: 20px; }
.mm-val { margin-left: auto; text-align: right; }
.mm-title { font-size: 23px; line-height: 30px; font-weight: 700; letter-spacing: -.2px; }
.mm-ok { font-size: 20.500px; line-height: 29px; color: #1c8234; }
.mm-sub { font-size: 20px; line-height: 29px; color: #6a7180; }
```
